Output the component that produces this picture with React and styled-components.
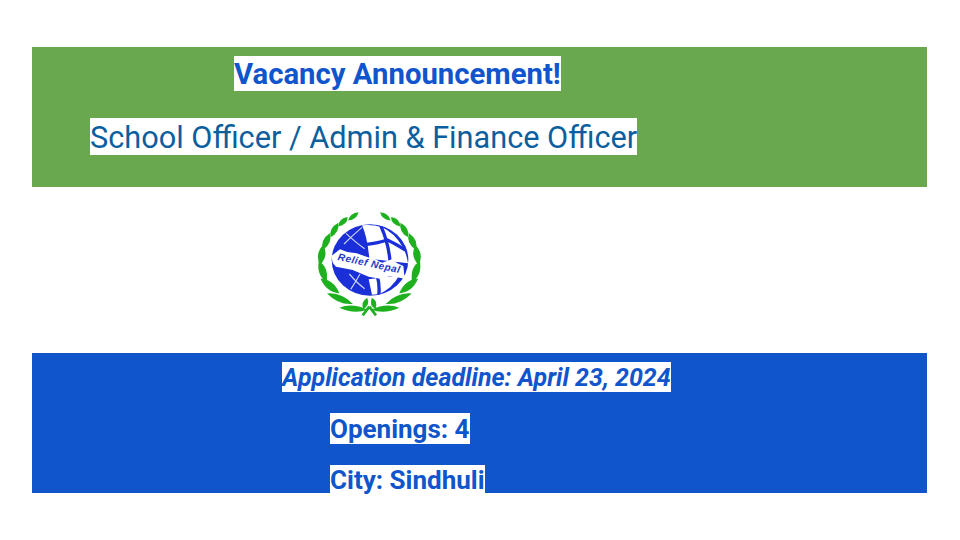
import styled, { createGlobalStyle } from "styled-components"

const GlobalStyle = createGlobalStyle`
  html, body {
    margin: 0;
    padding: 0;
    background: #fff;
    font-family: "Roboto", "Liberation Sans", sans-serif;
  }
`

const Page = styled.div`
  width: 960px;
  height: 540px;
  box-sizing: border-box;
  padding: 47px 33px 0 32px;
  display: flex;
  flex-direction: column;
  overflow: hidden;
`

const Band = styled.section`
  height: 140px;
  flex: none;
  background: ${(p) => p.$bg};
  box-sizing: border-box;
  padding-top: ${(p) => p.$top}px;
  display: flex;
  flex-direction: column;
  gap: ${(p) => p.$gap}px;
  align-items: flex-start;
`

const Line = styled.div`
  margin-left: ${(p) => p.$indent}px;
  height: ${(p) => p.$height}px;
  line-height: ${(p) => p.$leading || p.$height}px;
  background: #fff;
  color: ${(p) => p.$color || "#1155cc"};
  font-size: ${(p) => p.$size}px;
  font-weight: ${(p) => p.$weight || 700};
  white-space: nowrap;
`

const LogoRow = styled.div`
  height: 166px;
  flex: none;
  display: flex;
  padding: 13px 0 0 268px;
  box-sizing: border-box;
`

const LogoSvg = styled.svg`
  display: block;
  width: 140px;
  height: 125px;
`

function Leaf({ x, y, rot, len, wid }) {
  return (
    <path
      transform={`translate(${x} ${y}) rotate(${rot})`}
      d={`M${-len} 0 Q${-len * 0.1} ${-wid * 2} ${len} 0 Q${len * 0.1} ${wid * 2} ${-len} 0Z`}
      fill="#1fb01f"
    />
  )
}

// left half of the wreath, the right half is the same thing mirrored
const wreath = [
  { x: 160, y: 49, rot: -38, len: 20, wid: 7 },
  { x: 129, y: 65, rot: -45, len: 20, wid: 8 },
  { x: 103, y: 90, rot: -62, len: 25, wid: 9 },
  { x: 79, y: 125, rot: -68, len: 27, wid: 10 },
  { x: 65, y: 165, rot: -82, len: 30, wid: 11 },
  { x: 68, y: 214, rot: 70, len: 34, wid: 11 },
  { x: 90, y: 258, rot: 38, len: 36, wid: 11 },
  { x: 120, y: 296, rot: 22, len: 42, wid: 10 },
  { x: 160, y: 326, rot: 4, len: 42, wid: 9 },
]

const whiteCells = [
  "M186 76 Q216 72 246 82 Q282 98 306 138 Q320 160 324 190 L208 176 Q202 110 186 76Z",
  "M206 238 L298 226 Q276 266 238 282 L216 284Z",
]

const gridLines = [
  "M242 76 Q266 130 270 184",
  "M192 134 Q232 130 262 120 Q284 130 316 150",
  "M232 228 Q240 256 236 290",
]

function Logo() {
  return (
    <LogoSvg viewBox="0 0 420 375">
      <defs>
        <clipPath id="globe">
          <ellipse cx="210" cy="180" rx="115" ry="107" />
        </clipPath>
      </defs>
      <ellipse cx="210" cy="180" rx="115" ry="107" fill="#1a2fd8" />
      <g clipPath="url(#globe)">
        {whiteCells.map((d) => (
          <path key={d} d={d} fill="#fff" />
        ))}
        <g stroke="#1a2fd8" strokeWidth="10" fill="none">
          {gridLines.map((d) => (
            <path key={d} d={d} />
          ))}
        </g>
        <g stroke="#c9d2f5" strokeWidth="3.5" fill="none">
          <path d="M132 132 Q160 104 186 82" />
          <path d="M138 100 Q168 128 194 146" />
          <path d="M148 222 Q172 250 194 266" />
          <path d="M152 268 Q168 244 180 222" />
        </g>
      </g>
      <path
        d="M94 168 L120 148 L142 156 L170 160 L204 172 L226 178 L246 188 L276 178 L292 190 L310 198 L314 236 L272 228 L240 236 L206 230 L158 210 L108 200 L98 188Z"
        fill="#fff"
      />
      <text
        x="112"
        y="180"
        transform="rotate(12 112 180)"
        fontFamily="Liberation Sans, sans-serif"
        fontSize="30"
        fontWeight="700"
        fontStyle="italic"
        fill="#2438c4"
        textLength="190"
      >
        Relief Nepal
      </text>
      {wreath.map((l) => (
        <Leaf key={l.y} {...l} />
      ))}
      <g transform="matrix(-1 0 0 1 416 0)">
        {wreath.map((l) => (
          <Leaf key={l.y} {...l} />
        ))}
      </g>
      <Leaf x={196} y={310} rot={-72} len={18} wid={8} />
      <Leaf x={221} y={310} rot={72} len={18} wid={8} />
      <path d="M208 320 L188 346 M208 320 L228 346" stroke="#1fb01f" strokeWidth="8" />
    </LogoSvg>
  )
}

export default function App() {
  return (
    <Page>
      <GlobalStyle />
      <Band $bg="#6aa84f" $top={9} $gap={27}>
        <Line $indent={202} $height={35} $leading={37} $size={29.3}>
          Vacancy Announcement!
        </Line>
        <Line $indent={58} $height={37} $leading={39} $size={30.7} $weight={400} $color="#0b5f9e">
          School Officer / Admin &amp; Finance Officer
        </Line>
      </Band>
      <LogoRow>
        <Logo />
      </LogoRow>
      <Band $bg="#1155cc" $top={9} $gap={21}>
        <Line $indent={250} $height={30} $leading={32} $size={25}>
          <em>Application deadline: April 23, 2024</em>
        </Line>
        <Line $indent={298} $height={31} $leading={33} $size={26}>
          Openings: 4
        </Line>
        <Line $indent={298} $height={28} $leading={30} $size={26}>
          City: Sindhuli
        </Line>
      </Band>
    </Page>
  )
}
